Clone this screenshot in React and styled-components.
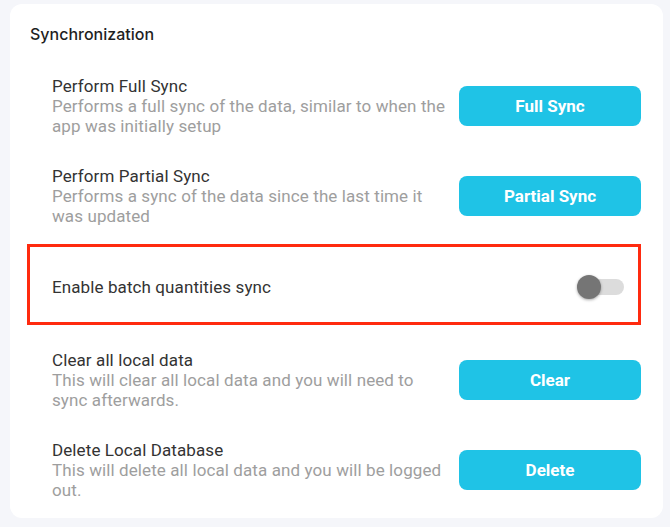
import React, { useState } from 'react';
import styled, { createGlobalStyle } from 'styled-components';

const GlobalStyle = createGlobalStyle`
  html, body {
    margin: 0;
    padding: 0;
    background: #f5f6fa;
    font-family: Roboto, "Liberation Sans", sans-serif;
  }
  * { box-sizing: border-box; }
`;

const Page = styled.div`
  width: 670px;
  height: 527px;
  padding: 4px 7px 9px 10px;
  background: #f5f6fa;
`;

const Card = styled.section`
  background: #fff;
  border-radius: 12px;
  height: 514px;
  padding: 20px 22px 3px 20px;
`;

const Title = styled.h2`
  margin: 0 0 17px;
  font-family: Inter, Roboto, sans-serif;
  font-size: 16px;
  font-weight: 500;
  line-height: 20px;
  color: #1f1f1f;
`;

const Row = styled.div`
  display: flex;
  align-items: center;
  justify-content: space-between;
  padding: 15px 0 15px 22px;
`;

const TextBlock = styled.div`
  flex: 1;
  padding-right: 6px;
`;

const Label = styled.div`
  font-size: 17px;
  letter-spacing: 0.1px;
  line-height: 20px;
  color: #333;
`;

const Hint = styled.div`
  font-size: 17px;
  letter-spacing: 0.1px;
  line-height: 20px;
  color: #9e9e9e;
`;

const ActionButton = styled.button`
  flex: none;
  width: 182px;
  height: 40px;
  border: none;
  border-radius: 8px;
  background: #1fc3e6;
  color: #fff;
  font-family: Roboto, sans-serif;
  font-size: 17px;
  font-weight: 700;
  cursor: pointer;
`;

const Highlight = styled.div`
  display: flex;
  align-items: center;
  justify-content: space-between;
  margin: 3px 0 10px -3px;
  border: 3px solid #ff2a0f;
  padding: 28px 14px 23px 22px;
`;

const Track = styled.button`
  position: relative;
  width: 47px;
  height: 24px;
  padding: 0;
  border: none;
  background: transparent;
  cursor: pointer;

  &::before {
    content: '';
    position: absolute;
    left: 7px;
    right: 0;
    top: 4px;
    height: 16px;
    border-radius: 8px;
    background: ${p => (p.$on ? '#9ee3f2' : '#dcdcdc')};
  }
`;

const Thumb = styled.span`
  position: absolute;
  top: 0;
  left: ${p => (p.$on ? '23px' : '0')};
  width: 24px;
  height: 24px;
  border-radius: 50%;
  background: ${p => (p.$on ? '#1fc3e6' : '#757575')};
  box-shadow: 0 1px 3px rgba(0, 0, 0, 0.35);
`;

const Switch = ({ on, onToggle }) => (
  <Track $on={on} onClick={onToggle} aria-pressed={on}>
    <Thumb $on={on} />
  </Track>
);

const rows = [
  {
    label: 'Perform Full Sync',
    hint: 'Performs a full sync of the data, similar to when the app was initially setup',
    action: 'Full Sync',
  },
  {
    label: 'Perform Partial Sync',
    hint: 'Performs a sync of the data since the last time it was updated',
    action: 'Partial Sync',
  },
];

const dangerRows = [
  {
    label: 'Clear all local data',
    hint: 'This will clear all local data and you will need to sync afterwards.',
    action: 'Clear',
  },
  {
    label: 'Delete Local Database',
    hint: 'This will delete all local data and you will be logged out.',
    action: 'Delete',
  },
];

const SettingRow = ({ label, hint, action }) => (
  <Row>
    <TextBlock>
      <Label>{label}</Label>
      <Hint>{hint}</Hint>
    </TextBlock>
    <ActionButton>{action}</ActionButton>
  </Row>
);

export default function App() {
  const [batch, setBatch] = useState(false);

  return (
    <Page>
      <GlobalStyle />
      <Card>
        <Title>Synchronization</Title>
        {rows.map(r => <SettingRow key={r.action} {...r} />)}
        <Highlight>
          <Label>Enable batch quantities sync</Label>
          <Switch on={batch} onToggle={() => setBatch(b => !b)} />
        </Highlight>
        {dangerRows.map(r => <SettingRow key={r.action} {...r} />)}
      </Card>
    </Page>
  );
}
